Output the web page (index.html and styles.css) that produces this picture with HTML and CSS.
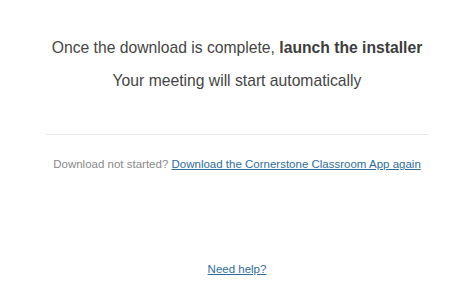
FILE: index.html
```html
<!DOCTYPE html>
<html>
<head>
<meta charset="utf-8">
<link rel="stylesheet" href="styles.css">
</head>
<body>
<main class="card">
  <section class="intro">
    <p class="lead">Once the download is complete, <strong>launch the installer</strong></p>
    <p class="lead">Your meeting will start automatically</p>
  </section>
  <hr class="divider">
  <p class="retry">Download not started? <a href="#" class="link">Download the Cornerstone Classroom App again</a></p>
  <p class="help"><a href="#" class="link">Need help?</a></p>
</main>
</body>
</html>
```
FILE: styles.css
```css
html, body {
  margin: 0;
  padding: 0;
  background: #ffffff;
}
body {
  font-family: "Liberation Sans", Arial, sans-serif;
  width: 474px;
  height: 295px;
  overflow: hidden;
}
.card {
  display: flex;
  flex-direction: column;
  align-items: center;
  padding: 38px 46px 0;
  height: 295px;
  box-sizing: border-box;
}
.intro {
  display: flex;
  flex-direction: column;
  align-items: center;
  gap: 14px;
}
.lead {
  margin: 0;
  font-size: 15.7px;
  line-height: 19px;
  color: #454545;
  white-space: nowrap;
}
.lead strong {
  font-weight: bold;
  color: #3d3d3d;
}
.divider {
  align-self: stretch;
  border: 0;
  border-top: 1px solid #e8e8e8;
  margin: 44px 0 0;
}
.retry {
  margin: 21px 0 0;
  font-size: 11.5px;
  line-height: 16px;
  color: #8a8a8a;
  white-space: nowrap;
}
.link {
  color: #2f6e9c;
  text-decoration: underline;
}
.help {
  margin: 89px 0 0;
  font-size: 11.5px;
  line-height: 16px;
}
```
